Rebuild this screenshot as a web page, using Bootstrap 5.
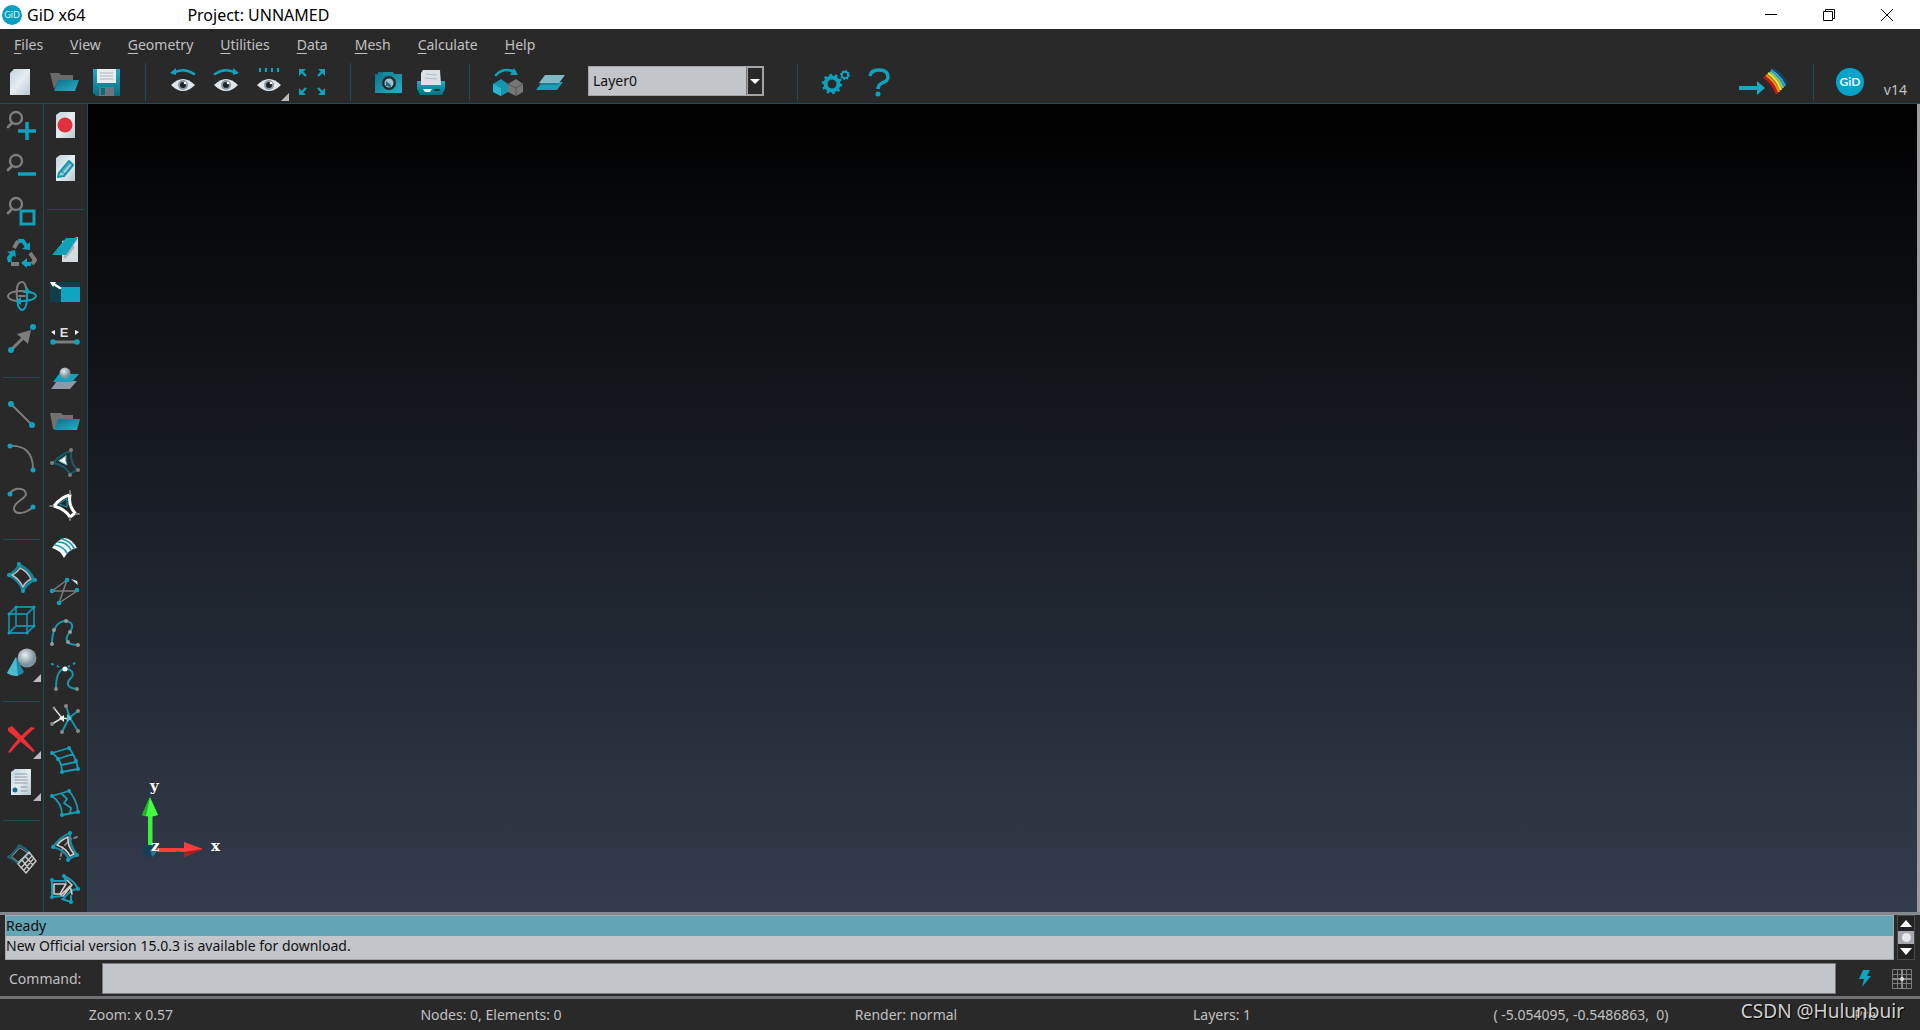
<!DOCTYPE html>
<html lang="en" data-bs-theme="dark">
<head>
<meta charset="utf-8">
<meta name="viewport" content="width=device-width, initial-scale=1">
<title>GiD x64</title>
<link href="https://cdn.jsdelivr.net/npm/bootstrap@5.3.0/dist/css/bootstrap.min.css" rel="stylesheet">
<style>
:root{--panel:#292929;--line:#1d4c58;--teal:#0fa2be;--grey:#7d7d7d;--field:#c2c5ca;--ink:#c0c0c0}
body{font-family:"Noto Sans","Open Sans",sans-serif;font-size:14px;line-height:20px;background:var(--panel);color:var(--ink)}
svg{display:block;overflow:visible}
.ic{width:30px;height:30px;fill:none;stroke-linecap:round;stroke-linejoin:round}
.app-title{height:29px;background:#fff;color:#000;font-size:16px;padding:0 4px 0 2px}
.app-title .logo-dot{width:20px;height:20px;margin-right:5px}
.proj-name{margin-left:102px}
.win-btn{width:58px;height:29px}
.win-btn svg{width:12px;height:12px;stroke:#000;fill:none}
.plain-btn{background:none;border:0;padding:0;color:inherit;display:flex;align-items:center;justify-content:center;position:relative}
.app-menu{height:32px;padding:0 14px;gap:27px}
.app-menu a{color:var(--ink);text-decoration:none}
.app-menu u{text-underline-offset:3px}
.app-tools{height:43px;border-bottom:1px solid var(--line)}
.app-tools .plain-btn{width:43px;height:42px;padding-right:2px}
.app-tools .wide-btn{width:52px}
.v-sep{width:1px;height:38px;margin:0 16px;background:var(--line)}
.layer-box + .v-sep{margin-left:33px}
.wide-btn + .v-sep{margin-left:24px}
.ver-mark{padding:0 13px 3px 11px}
.has-more::after{content:"";position:absolute;right:2px;bottom:2px;border-style:solid;border-width:0 0 8px 8px;border-color:transparent transparent #b9b9c0 transparent}
.layer-box{width:176px;height:30px;border:1px solid #a2a4a8;background:var(--panel);margin:0 0 2px 16px}
.layer-box select{appearance:none;border:0;border-radius:0;outline:0;background:var(--field);color:#111;flex:1 1 0;min-width:0;padding:0 4px;height:28px;border-right:1px solid #777}
.layer-box .drop-mark{width:16px;border:1px solid #a2a4a8;display:flex;align-items:center;justify-content:center}
.side-col{width:44px;border-right:1px solid var(--line)}
.side-col .plain-btn{flex:1 1 0;min-height:0;width:100%}
.side-a{padding-bottom:32px}
.side-b{padding-bottom:2px}
.side-b .plain-btn{padding-right:2px}
.h-sep{height:34px;flex:none;display:flex;align-items:center;padding:0 3px}
.side-b .h-sep{height:40px}
.h-sep::before{content:"";height:1px;width:100%;background:var(--line)}
.work-area{min-height:0}
.view-area{background:linear-gradient(#000,#343d4d);border-right:3px solid #9c9ca0}
.axis-mark{position:absolute;left:52px;bottom:45px;width:90px;height:90px}
.axis-mark text{font:bold 15px "DejaVu Serif",serif;fill:#fff}
.log-area{border-top:3px solid #85898f;padding:0 5px;height:48px}
.log-list{background:var(--field);border:1px solid #a4a6aa;color:#111;height:45px}
.log-list li{height:20px;line-height:20px}
.log-list .picked{background:#63a4b5}
.log-scroll{width:18px;margin-left:3px;background:#48494c;padding:1px}
.log-scroll .plain-btn{flex:1 1 0;background:#222}
.log-scroll svg{width:12px;height:7px;fill:#fff}
.log-scroll .grip{height:13px;background:#a4a8ae;display:flex;align-items:center;justify-content:center}
.log-scroll .grip::before{content:"";width:9px;height:9px;border-radius:50%;background:#e6e8ea}
.cmd-row{height:36px;padding:3px 0 2px 9px}
.cmd-row label{width:93px}
.cmd-row input{background:var(--field);border:1px solid #77797c;border-radius:0;height:31px;color:#111;min-width:0;margin-right:10px}
.cmd-row .plain-btn{width:37px;height:31px}
.status-row{height:34px;border-top:3px solid #707274;text-align:center}
.status-row>div{min-width:0;white-space:pre}
.s-1{flex:262 1 0}.s-2{flex:458 1 0}.s-3{flex:372 1 0}.s-4{flex:260 1 0}.s-5{flex:458 1 0}.s-6{flex:110 1 0}
.credit{position:absolute;right:16px;bottom:7px;font-size:19px;line-height:24px;color:#d0d0d0;text-shadow:1px 1px 1px #000}
.t{stroke:var(--teal)}.g{stroke:var(--grey)}
.tf{fill:var(--teal);stroke:none}.gf{fill:var(--grey);stroke:none}.wf{fill:#eef3f6;stroke:none}
</style>
<script src="https://cdn.jsdelivr.net/npm/bootstrap@5.3.0/dist/js/bootstrap.bundle.min.js"></script>
</head>
<body>
<svg width="0" height="0" class="position-absolute" aria-hidden="true">
<defs>
<linearGradient id="paper" x2="1" y2="1"><stop stop-color="#c3d3dc"/><stop offset=".5" stop-color="#e4edf2"/><stop offset="1" stop-color="#b9c7d0"/></linearGradient>
<linearGradient id="sea" x2="1" y2="1"><stop stop-color="#0c6f85"/><stop offset="1" stop-color="#2ab0c9"/></linearGradient>
<linearGradient id="sea2" x2="0" y2="1"><stop stop-color="#25a9c4"/><stop offset="1" stop-color="#0a6c82"/></linearGradient>
<radialGradient id="ball" cx=".4" cy=".35"><stop stop-color="#e9eff2"/><stop offset="1" stop-color="#7e929d"/></radialGradient>
<g id="eye"><path d="M3 18Q15 6 27 18Q15 30 3 18Z" fill="#dfe6eb"/><circle cx="15" cy="18" r="5" fill="#8b99a3"/><circle cx="15" cy="18" r="3" fill="#1d2226"/><circle cx="17" cy="16" r="1.3" fill="#fff"/></g>
<g id="lens" class="g"><circle cx="9" cy="8" r="6" stroke-width="2.4"/><path d="M5 13L1 17" stroke-width="2.8"/></g>
<path id="sheet" d="M6 5L10 2H25V28H6Z" fill="url(#paper)"/>
</defs></svg>

<div class="vh-100 d-flex flex-column overflow-hidden">
<header class="app-title d-flex align-items-center flex-shrink-0">
  <svg class="logo-dot" viewBox="0 0 20 20"><circle cx="10" cy="10" r="10" fill="#079fc0"/><text x="10" y="13" text-anchor="middle" font-size="9" font-family="Lato" fill="#d9f4fa">GiD</text></svg>
  <div>GiD x64</div><div class="proj-name">Project: UNNAMED</div>
  <div class="ms-auto d-flex">
    <button class="plain-btn win-btn" aria-label="Minimize"><svg viewBox="0 0 12 12"><path d="M0 5.500H12"/></svg></button>
    <button class="plain-btn win-btn" aria-label="Restore"><svg viewBox="0 0 12 12"><path d="M.5 2.500H9.500V11.500H.5ZM2.500 2.500V.5H11.500V9.500H9.500"/></svg></button>
    <button class="plain-btn win-btn" aria-label="Close"><svg viewBox="0 0 12 12"><path d="M0 0L12 12M12 0L0 12"/></svg></button>
  </div>
</header>

<nav class="app-menu d-flex align-items-center flex-shrink-0">
  <a href="#"><u>F</u>iles</a><a href="#"><u>V</u>iew</a><a href="#"><u>G</u>eometry</a><a href="#"><u>U</u>tilities</a><a href="#"><u>D</u>ata</a><a href="#"><u>M</u>esh</a><a href="#"><u>C</u>alculate</a><a href="#"><u>H</u>elp</a>
</nav>

<div class="app-tools d-flex align-items-center flex-shrink-0" role="toolbar">
  <button class="plain-btn" aria-label="New"><svg class="ic" viewBox="0 0 30 30"><path d="M4 6L8 2H24V28H4Z" fill="url(#paper)"/></svg></button>
  <button class="plain-btn" aria-label="Open"><svg class="ic" viewBox="0 0 30 30"><path d="M1 6H10L12 8H24V13H10L5 22Z" fill="#6a6a6a"/><path d="M9 13H30L26 24H5Z" fill="url(#sea)"/></svg></button>
  <button class="plain-btn" aria-label="Save"><svg class="ic" viewBox="0 0 30 30"><path d="M1 2H28V29H4L1 26Z" fill="url(#sea2)"/><path d="M5 2H24V16H5Z" fill="#e9edef"/><path d="M8 6H21M8 9H21M8 12H21" stroke="#aab4ba"/><path d="M7 20H22V29H7Z" fill="#6c757b"/><path d="M9 21H13V28H9Z" fill="#0b6b80"/></svg></button>
  <span class="v-sep"></span>
  <button class="plain-btn" aria-label="Previous view"><svg class="ic" viewBox="0 0 30 30"><use href="#eye"/><path class="t" d="M5 6Q16 0 26 7" stroke-width="2.5"/><path class="tf" d="M2 6L8 1V8Z"/></svg></button>
  <button class="plain-btn" aria-label="Next view"><svg class="ic" viewBox="0 0 30 30"><use href="#eye"/><path class="t" d="M4 7Q14 0 25 6" stroke-width="2.5"/><path class="tf" d="M28 6L22 1V8Z"/></svg></button>
  <button class="plain-btn has-more" aria-label="Saved views"><svg class="ic" viewBox="0 0 30 30"><use href="#eye"/><path class="t" d="M6 1V5M12 1V5M18 1V5M24 1V5" stroke-width="2.2" stroke-linecap="butt"/></svg></button>
  <button class="plain-btn" aria-label="Zoom frame"><svg class="ic" viewBox="0 0 30 30"><g class="tf"><path d="M2 2H9L2 9ZM28 2H21L28 9ZM2 28H9L2 21ZM28 28H21L28 21Z"/></g><path class="t" d="M4 4L9 9M26 4L21 9M4 26L9 21M26 26L21 21" stroke-width="2.4" stroke-linecap="butt"/></svg></button>
  <span class="v-sep"></span>
  <button class="plain-btn" aria-label="Snapshot"><svg class="ic" viewBox="0 0 30 30"><path d="M2 7H5V5H9V7H29V26H2Z" fill="url(#sea)"/><path d="M10 5H20L22 8H8Z" fill="#158ba3"/><circle cx="16" cy="16" r="7" fill="#252a2d"/><circle cx="16" cy="16" r="4.500" fill="#9fc3cf"/><path d="M13 14L18 18V20L13 19Z" fill="#216b82"/></svg></button>
  <button class="plain-btn" aria-label="Print"><svg class="ic" viewBox="0 0 30 30"><path d="M1 14H29V22L26 28H4L1 22Z" fill="url(#sea2)"/><path d="M7 3H24L25 18H5V6Z" fill="#dbe2e7"/><path d="M10 7L20 8M9 11L21 12" stroke="#b0bac1"/><path d="M7 22H16L14 25H9Z" fill="#e8edf0"/><path d="M19 23H23" stroke="#0a3a46" stroke-width="2"/></svg></button>
  <span class="v-sep"></span>
  <button class="plain-btn" aria-label="Toggle mesh"><svg class="ic" viewBox="0 0 30 30"><path d="M1 17L9 12L16 17V25L9 29L1 25Z" fill="#1595ad"/><path d="M9 21V29L1 25V17Z" fill="#2db2ca"/><path d="M16 17L24 12L31 17V25L24 29L16 25Z" fill="#777"/><path d="M16 17L24 21L31 17M24 21V29" stroke="#555"/><path class="t" d="M4 8Q12 0 23 5" stroke-width="2.5"/><path class="tf" d="M26 8L18 8L22 1Z"/></svg></button>
  <button class="plain-btn" aria-label="Layers"><svg class="ic" viewBox="0 0 30 30"><path d="M7 15H28L22 23H1Z" fill="#1a9db6"/><path d="M10 8H30L24 16H4Z" fill="#7fb9c6"/><path d="M4 17H23" stroke="#255f6c"/></svg></button>
  <div class="layer-box d-flex"><select aria-label="Layer"><option>Layer0</option></select><span class="drop-mark"><svg width="10" height="5"><path d="M0 0H10L5 5Z" fill="#fff"/></svg></span></div>
  <span class="v-sep"></span>
  <button class="plain-btn" aria-label="Preferences"><svg class="ic" viewBox="0 0 30 30"><circle class="t" cx="12" cy="17" r="6.500" stroke-width="4"/><circle class="t" cx="12" cy="17" r="9" stroke-width="2.500" stroke-dasharray="2.500 3.150" stroke-linecap="butt"/><circle class="t" cx="25" cy="8" r="3.200" stroke-width="2"/><circle class="t" cx="25" cy="8" r="4.500" stroke-width="1.200" stroke-dasharray="1.500 2" stroke-linecap="butt"/></svg></button>
  <button class="plain-btn" aria-label="Help"><svg class="ic" viewBox="0 0 30 30"><path class="t" d="M7 9Q8 3 16 3Q25 3 25 10Q25 14 19 16Q15 18 15 22" stroke-width="3.500" stroke-linecap="butt"/><circle class="tf" cx="15" cy="27" r="2.500"/></svg></button>
  <button class="plain-btn wide-btn ms-auto" aria-label="Postprocess"><svg width="52" height="30" viewBox="0 0 52 30"><path d="M3 19H21V14L29 21L21 28V23H3Z" fill="#1aa7bf"/><g fill="none" stroke-width="2.500"><path d="M28 10Q37 16 41 27" stroke="#c4151c"/><path d="M30 8Q39 14 43 25" stroke="#f58a16"/><path d="M32 6Q41 12 45 23" stroke="#f7e02b"/><path d="M34 5Q43 11 47 21" stroke="#7ecb75"/><path d="M35 3Q45 9 49 19" stroke="#2da4dc"/><path d="M37 2Q47 8 51 17" stroke="#15416f"/></g></svg></button>
  <span class="v-sep"></span>
  <button class="plain-btn" aria-label="About"><svg class="ic" viewBox="0 0 30 30"><circle cx="15" cy="15" r="14" fill="#05a3c9"/><text x="15" y="19" text-anchor="middle" font-size="12" font-weight="bold" font-family="Lato" fill="#e3f7fc">GiD</text></svg></button>
  <span class="ver-mark align-self-end">v14</span>
</div>

<main class="work-area d-flex flex-fill">
  <div class="side-col side-a d-flex flex-column flex-shrink-0">
    <button class="plain-btn" aria-label="Zoom in"><svg class="ic" viewBox="0 0 30 30"><use href="#lens"/><path class="t" d="M20 12V30M11 21H29" stroke-width="3.500" stroke-linecap="butt"/></svg></button>
    <button class="plain-btn" aria-label="Zoom out"><svg class="ic" viewBox="0 0 30 30"><use href="#lens"/><path class="t" d="M11 21H29" stroke-width="3.500" stroke-linecap="butt"/></svg></button>
    <button class="plain-btn" aria-label="Zoom window"><svg class="ic" viewBox="0 0 30 30"><use href="#lens"/><path class="t" d="M14 15H27V28H14Z" stroke-width="3" stroke-linejoin="miter"/></svg></button>
    <button class="plain-btn" aria-label="Redraw"><svg class="ic" viewBox="0 0 30 30" stroke-width="4"><g stroke-linecap="butt"><path class="t" d="M11 3H16L20 9"/><path class="tf" d="M15 11L23 12L23 4Z"/><path class="g" d="M11 3L7 10M23 15L28 22L25 26"/><path class="t" d="M3 24L2 20L5 16M24 26H19"/><path class="tf" d="M0 14L8 12L9 19ZM20 20V30L14 25Z"/><path class="g" d="M4 26H12"/></g></svg></button>
    <button class="plain-btn" aria-label="Rotate"><svg class="ic" viewBox="0 0 30 30" stroke-width="2"><path class="g" d="M10 20Q1 19 1 15Q2 10 15 10Q22 10 25 12M11 24Q7 1 15 1Q18 1 19 7M12 15H18"/><path class="t" d="M21 11Q29 12 29 15Q28 20 12 20M20 9Q21 28 15 29Q12 28 11 24"/><path class="tf" d="M8 20L14 16V24ZM20 6L24 12H16Z"/></svg></button>
    <button class="plain-btn" aria-label="Pan"><svg class="ic" viewBox="0 0 30 30"><path class="g" d="M5 25L16 14" stroke-width="3"/><path class="gf" d="M24 6L21 20L10 10Z"/><circle class="tf" cx="4" cy="26" r="3"/><circle class="tf" cx="26" cy="3" r="3"/></svg></button>
    <span class="h-sep"></span>
    <button class="plain-btn" aria-label="Line"><svg class="ic" viewBox="0 0 30 30"><path class="g" d="M4 4L25 25" stroke-width="2"/><circle class="tf" cx="4" cy="4" r="3"/><circle class="tf" cx="25" cy="25" r="3"/></svg></button>
    <button class="plain-btn" aria-label="Arc"><svg class="ic" viewBox="0 0 30 30"><path class="g" d="M3 3Q26 2 26 26" stroke-width="1.800"/><circle class="tf" cx="3" cy="3" r="2.500"/><circle class="tf" cx="26" cy="27" r="2.500"/></svg></button>
    <button class="plain-btn" aria-label="Spline"><svg class="ic" viewBox="0 0 30 30"><path class="g" d="M3 8C6 1 18 1 19 8C19 13 6 16 7 23C8 30 20 27 26 21" stroke-width="2"/><circle class="tf" cx="3" cy="8" r="2.500"/><circle class="tf" cx="26" cy="21" r="2.500"/></svg></button>
    <span class="h-sep"></span>
    <button class="plain-btn" aria-label="Surface"><svg class="ic" viewBox="0 0 30 30"><path d="M12 3Q22 7 27 18Q20 21 16 28Q12 18 2 13Q9 10 12 3Z" stroke="#12839b" stroke-width="3"/><path d="M13 6Q20 9 24 17Q18 20 16 25Q12 17 5 13Q11 10 13 6Z" stroke="#c8b9ba" stroke-width="1.500"/><g class="tf"><circle cx="12" cy="2" r="2"/><circle cx="28" cy="18" r="2"/><circle cx="16" cy="29" r="2"/><circle cx="2" cy="13" r="2"/></g></svg></button>
    <button class="plain-btn" aria-label="Volume"><svg class="ic" viewBox="0 0 30 30"><path d="M2 9H20V28H2ZM9 2H27V21H9ZM2 9L9 2M20 9L27 2M20 28L27 21M2 28L9 21" stroke="#15879e" stroke-width="1.800"/><g class="tf"><circle cx="2" cy="9" r="1.500"/><circle cx="27" cy="2" r="1.500"/><circle cx="2" cy="28" r="1.500"/><circle cx="27" cy="21" r="1.500"/><circle cx="9" cy="2" r="1.500"/><circle cx="20" cy="28" r="1.500"/></g></svg></button>
    <button class="plain-btn has-more" aria-label="Object"><svg class="ic" viewBox="0 0 30 30"><circle cx="20" cy="10" r="9.500" fill="url(#ball)"/><path d="M9 9L17 24Q10 31 0 25Z" fill="#1d8ca4"/><path d="M9 9L11 28Q4 28 0 25Z" fill="#4cbbd0"/></svg></button>
    <span class="h-sep"></span>
    <button class="plain-btn has-more" aria-label="Delete"><svg class="ic" viewBox="0 0 30 30"><path d="M1 4L5 2Q15 12 28 27L26 28Q14 18 1 7ZM24 3L28 4Q16 14 3 29L1 28Q11 13 24 3Z" fill="#e72f35"/></svg></button>
    <button class="plain-btn has-more" aria-label="List"><svg class="ic" viewBox="0 0 30 30"><path d="M4 5L8 2H24V28H4Z" fill="url(#paper)"/><path d="M8 7H20M8 10H20M8 13H20M8 16H20M14 20H20M14 24H20" stroke="#8b989f"/><circle cx="8" cy="23" r="2.500" fill="#14708a"/></svg></button>
    <span class="h-sep"></span>
    <button class="plain-btn" aria-label="Generate mesh"><svg class="ic" viewBox="0 0 30 30"><path d="M12 1Q18 4 23 9L11 20Q7 15 1 13Q8 9 12 1Z" stroke="#1b6678" stroke-width="2"/><path d="M13 4L21 9L11 18L5 13Z" stroke="#999"/><path d="M22 8L29 17L19 29L11 20ZM18 12L26 21M15 16L22 25M25 12L14 24M27 14L17 26" stroke="#c8c8c8" stroke-width="1.400"/></svg></button>
  </div>
  <div class="side-col side-b d-flex flex-column flex-shrink-0">
    <button class="plain-btn" aria-label="Record macro"><svg class="ic" viewBox="0 0 30 30"><use href="#sheet"/><circle cx="15" cy="15" r="7.500" fill="#e3303c"/></svg></button>
    <button class="plain-btn" aria-label="Edit macros"><svg class="ic" viewBox="0 0 30 30"><use href="#sheet"/><path d="M9 20L19 8L23 12L14 23L8 24Z" stroke="#1895ad" stroke-width="2" fill="#9dcbd6"/><path d="M12 19L20 10M11 18L15 21" stroke="#1895ad"/></svg></button>
    <span class="h-sep"></span>
    <button class="plain-btn" aria-label="Send to layer"><svg class="ic" viewBox="0 0 30 30"><path d="M12 6L28 2V27H12Z" fill="#d5dbdf"/><path d="M15 22L23 12" stroke="#a9b4ba" stroke-width="3"/><path d="M16 3H28L16 20H2Z" fill="#119fba"/></svg></button>
    <button class="plain-btn" aria-label="Render"><svg class="ic" viewBox="0 0 30 30"><path d="M0 4H30V24H0Z" fill="#103e4a"/><path d="M11 9H30V24H11Z" fill="#0fa4c0"/><path d="M2 5L10 10" stroke="#fff" stroke-width="2.500"/><path d="M0 4L6 4L3 9Z" fill="#fff"/></svg></button>
    <button class="plain-btn" aria-label="Label entities"><svg class="ic" viewBox="0 0 30 30"><path class="g" d="M3 21H27" stroke-width="3"/><circle class="tf" cx="3" cy="21" r="2.800"/><circle class="tf" cx="27" cy="21" r="2.800"/><text x="14" y="16" text-anchor="middle" font-size="13" font-weight="bold" font-family="Liberation Sans" fill="#ddd">E</text><path class="wf" d="M1 11L5 9V14ZM29 11L25 9V14Z"/></svg></button>
    <button class="plain-btn" aria-label="Layer plane"><svg class="ic" viewBox="0 0 30 30"><path d="M7 18H27L20 26H1Z" fill="#9098a5"/><path d="M9 11H29L22 19H3Z" fill="#16a0ba"/><circle cx="15" cy="10" r="5.500" fill="url(#ball)"/></svg></button>
    <button class="plain-btn" aria-label="Open group"><svg class="ic" viewBox="0 0 30 30"><path d="M0 7H11L13 9H23V14L5 23H3Z" fill="#717171"/><path d="M8 13H30L27 24H4Z" fill="url(#sea)"/></svg></button>
    <button class="plain-btn" aria-label="Shrink surface"><svg class="ic" viewBox="0 0 30 30"><path d="M21 3Q20 14 27 22L20 26Q15 17 3 15Q11 6 21 3Z" stroke="#165a69" stroke-width="2"/><path d="M16 8Q15 13 17 17L9 13Z" fill="#fff" stroke="#54b5c8"/><g class="gf"><circle cx="21" cy="2" r="2"/><circle cx="2" cy="15" r="2"/><circle cx="28" cy="22" r="2"/><circle cx="20" cy="27" r="2"/></g></svg></button>
    <button class="plain-btn" aria-label="Trim surface"><svg class="ic" viewBox="0 0 30 30"><path d="M20 4Q18 14 25 22L20 26Q15 18 4 15Q11 6 20 4Z" stroke="#fff" stroke-width="3"/><path d="M17 8L17 16L9 13Z" stroke="#17a0ba" stroke-width="1"/><path class="g" d="M0 15L3 15M20 0V3M26 23H29M20 27V29" stroke-width="2"/></svg></button>
    <button class="plain-btn" aria-label="Parallel surfaces"><svg class="ic" viewBox="0 0 30 30"><path d="M2 15Q8 6 15 5Q22 6 27 15Q19 16 14 25Q10 17 2 15Z" fill="#f5fafb"/><path d="M5 12Q13 13 17 20M8 9Q17 9 21 17M12 6Q20 8 24 15" stroke="#1899b2" stroke-width="1.600"/></svg></button>
    <button class="plain-btn" aria-label="Straight lines"><svg class="ic" viewBox="0 0 30 30"><path class="g" d="M2 15H27L9 27M17 4L2 15M17 4L9 27" stroke-width="1.500"/><g class="tf"><circle cx="17" cy="4" r="2.300"/><circle cx="2" cy="15" r="2.300"/><circle cx="27" cy="14" r="2.300"/><circle cx="9" cy="27" r="2.300"/></g><path class="wf" d="M21 3L27 5L28 9Z"/></svg></button>
    <button class="plain-btn" aria-label="Nurbs line"><svg class="ic" viewBox="0 0 30 30"><path d="M2 26C2 10 8 3 16 3C23 4 24 9 19 15C14 22 17 27 28 27" stroke="#1793ab" stroke-width="2"/><g fill="#999"><circle cx="2" cy="26" r="2"/><circle cx="4" cy="12" r="2"/><circle cx="16" cy="3" r="2"/><circle cx="20" cy="14" r="2"/><circle cx="18" cy="24" r="2"/><circle cx="28" cy="27" r="2"/></g></svg></button>
    <button class="plain-btn" aria-label="Edit nurbs"><svg class="ic" viewBox="0 0 30 30"><path d="M6 28C6 16 9 8 15 8C23 8 25 14 20 18C15 24 19 27 27 28" stroke="#1793ab" stroke-width="2"/><path class="t" d="M2 3L14 8L25 2" stroke-dasharray="1 5" stroke-width="2"/><circle cx="15" cy="8" r="2.500" fill="#fff"/><g fill="#888"><circle cx="6" cy="28" r="2"/><circle cx="27" cy="28" r="2"/></g></svg></button>
    <button class="plain-btn" aria-label="Intersect lines"><svg class="ic" viewBox="0 0 30 30"><path d="M16 2L20 14L28 27M12 28L19 14L28 7" stroke="#1793ab" stroke-width="2"/><path d="M4 4L12 14L20 15M12 14L2 20" stroke="#ddd" stroke-width="1.500"/><g fill="#888"><circle cx="16" cy="2" r="2"/><circle cx="28" cy="7" r="2"/><circle cx="28" cy="27" r="2"/><circle cx="12" cy="28" r="2"/><circle cx="2" cy="20" r="2"/><circle cx="4" cy="4" r="1.500"/></g><path class="wf" d="M14 11V18L9 14Z"/><path fill="#5cc0d2" d="M17 10L22 14L17 18Z"/></svg></button>
    <button class="plain-btn" aria-label="Nurbs surface"><svg class="ic" viewBox="0 0 30 30"><path d="M2 7L19 2Q26 11 28 23L12 26Q12 14 2 7ZM8 13L23 8M11 19L26 16" stroke="#1a9bb4" stroke-width="1.800"/><g class="tf"><circle cx="2" cy="7" r="2"/><circle cx="19" cy="2" r="2"/><circle cx="28" cy="23" r="2"/><circle cx="12" cy="26" r="2"/><circle cx="8" cy="13" r="2"/><circle cx="26" cy="15" r="2"/></g></svg></button>
    <button class="plain-btn" aria-label="Split surface"><svg class="ic" viewBox="0 0 30 30"><path d="M2 7L19 2Q27 11 28 23L12 26Q12 14 2 7ZM12 5L17 10L14 14L21 19L20 24" stroke="#1a9bb4" stroke-width="1.800"/><g class="tf"><circle cx="2" cy="7" r="2"/><circle cx="19" cy="2" r="2"/><circle cx="28" cy="23" r="2"/><circle cx="12" cy="26" r="2"/></g></svg></button>
    <button class="plain-btn" aria-label="Hole surface"><svg class="ic" viewBox="0 0 30 30"><path class="g" d="M27 6L21 8L13 16L10 28" stroke-dasharray="3 3" stroke-width="2"/><path d="M20 2Q19 14 27 24L19 28Q15 19 3 16Q10 6 20 2Z" stroke="#178ba3" stroke-width="2.200"/><path d="M18 6Q17 15 24 23L20 25Q16 17 7 14Q11 9 18 6Z" stroke="#d7cccc" stroke-width="1.600"/><g class="tf"><circle cx="20" cy="2" r="2"/><circle cx="27" cy="24" r="2"/><circle cx="18" cy="29" r="2"/><circle cx="3" cy="16" r="2"/></g></svg></button>
    <button class="plain-btn" aria-label="Intersect surfaces"><svg class="ic" viewBox="0 0 30 30"><path d="M2 7H15M2 7V23L12 22M14 2Q24 6 28 15Q21 15 14 24M14 2L16 8M21 22V28L12 25" stroke="#1a9bb4" stroke-width="2"/><path d="M4 10H16L10 20H4ZM17 6L22 11L13 22M11 21L20 12L22 20" stroke="#d6cccc" stroke-width="1.600"/><g class="tf"><circle cx="2" cy="6" r="2"/><circle cx="14" cy="2" r="2"/><circle cx="28" cy="15" r="2"/><circle cx="21" cy="28" r="2"/><circle cx="2" cy="23" r="2"/></g></svg></button>
  </div>
  <section class="view-area flex-fill position-relative">
    <svg class="axis-mark" viewBox="0 0 90 90" role="img" aria-label="Axes x y z"><circle cx="10" cy="73" r="7.500" fill="#173e55"/><path d="M10 73L17 70Q18 76 12 80Z" fill="#2c6f96"/><path d="M8 36H12.500V68H8Z" fill="#3af23c"/><path d="M10 20L18 38Q10 41 2 38Z" fill="#42ff42"/><path d="M10 20L6 39L2 38Z" fill="#22ae26"/><path d="M17 71H44V75H17Z" fill="#fb3c3d"/><path d="M44 65L63 72L44 80Z" fill="#fb3f3f"/><path d="M44 75L63 72L44 80Z" fill="#a61d1d"/><text x="10" y="14">y</text><text x="11" y="74">z</text><text x="71" y="74">x</text></svg>
  </section>
</main>

<section class="log-area d-flex flex-shrink-0">
  <ul class="log-list list-unstyled m-0 flex-fill"><li class="picked">Ready</li><li>New Official version 15.0.3 is available for download.</li></ul>
  <div class="log-scroll d-flex flex-column"><button class="plain-btn" aria-label="Scroll up"><svg viewBox="0 0 12 7"><path d="M0 7H12L6 0Z"/></svg></button><div class="grip"></div><button class="plain-btn" aria-label="Scroll down"><svg viewBox="0 0 12 7"><path d="M0 0H12L6 7Z"/></svg></button></div>
</section>
<div class="cmd-row d-flex align-items-center flex-shrink-0">
  <label for="cmd">Command:</label><input id="cmd" type="text" class="flex-fill">
  <button class="plain-btn" aria-label="Run"><svg width="12" height="17" viewBox="0 0 12 17"><path d="M4 0H11L8 6H12L3 17L5 9H0Z" fill="#10a3bd"/></svg></button>
  <button class="plain-btn" aria-label="Grid"><svg width="20" height="20" viewBox="0 0 20 20"><path d="M.5.5H19.500V19.500H.5ZM5.500 0V20M14.500 0V20M0 5.500H20M0 14.500H20" fill="none" stroke="#7c7c7c"/><path d="M10 0V20M0 10H20" stroke="#8a8a8a" stroke-width="2"/><circle cx="10" cy="10" r="2" fill="#ddd"/></svg></button>
</div>
<footer class="status-row d-flex align-items-center flex-shrink-0 position-relative">
  <div class="s-1">Zoom: x 0.57</div><div class="s-2">Nodes: 0, Elements: 0</div><div class="s-3">Render: normal</div><div class="s-4">Layers: 1</div><div class="s-5">( -5.054095, -0.5486863,  0)</div><div class="s-6">Pre</div>
  <span class="credit">CSDN @Hulunbuir</span>
</footer>
</div>
</body>
</html>
